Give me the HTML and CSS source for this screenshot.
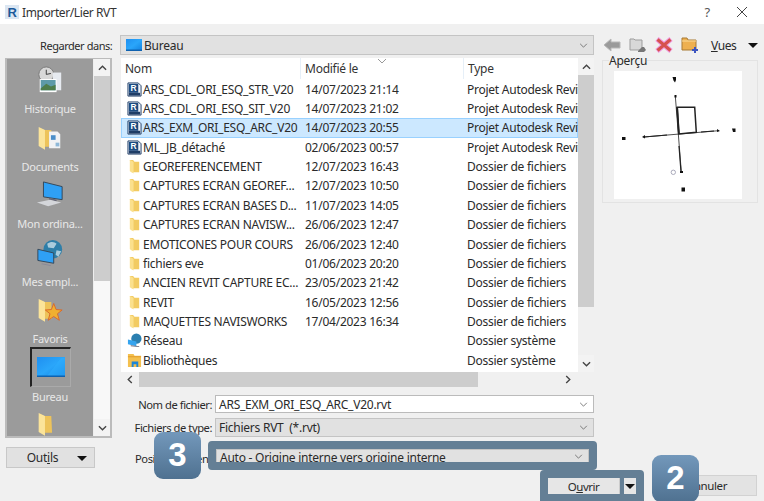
FILE: index.html
```html
<!DOCTYPE html>
<html lang="fr">
<head>
<meta charset="utf-8">
<title>Importer/Lier RVT</title>
<link rel="stylesheet" href="styles.css">
</head>
<body>
<svg class="defs" width="0" height="0" aria-hidden="true">
  <defs>
    <linearGradient id="screen" x1="0" y1="0" x2="1" y2="1"><stop offset="0" stop-color="#1f8ff0"/><stop offset=".5" stop-color="#2aa6fa"/><stop offset="1" stop-color="#1180e0"/></linearGradient>
    <symbol id="folder" viewBox="0 0 14 16">
      <path d="M2 1h3.500l1.500 2h5v11H4z" fill="#f2cb62"/>
      <path d="M2 1l4 2v12.500L2 13z" fill="#fbe08c"/>
    </symbol>
    <symbol id="rvt" viewBox="0 0 16 16">
      <path d="M1 1h11l3 3v11H1z" fill="#eef2f8" stroke="#1f3d66"/>
      <rect x="2" y="2" width="10" height="9.500" fill="#1c4b80"/>
      <text x="3.600" y="10" class="rvt-r">R</text>
      <rect x="2" y="11.500" width="12" height="3" fill="#1f3d66"/>
    </symbol>
    <symbol id="bigfolder" viewBox="0 0 26 30">
      <path d="M2 2l6 3h9l1 21H7z" fill="#edc35a"/>
      <path d="M1 1l8 4v25l-8-5z" fill="#fbe49a"/>
    </symbol>
  </defs>
</svg>
<div class="dialog">
  <header class="titlebar">
    <svg class="app-icon" viewBox="0 0 14 14" aria-hidden="true"><rect width="14" height="14" fill="#dbe6f2"/><text x="2.500" y="12" class="app-r">R</text></svg>
    <span class="title">Importer/Lier RVT</span>
    <span class="help">?</span>
    <svg class="close" viewBox="0 0 12 12" aria-hidden="true"><path d="M1 1l10 10M11 1L1 11" stroke="#444" fill="none"/></svg>
  </header>

  <div class="lookin">
    <label class="lookin-label">Regarder dans:</label>
    <div class="combo lookin-combo">
      <svg class="mini-screen" viewBox="0 0 16 12" aria-hidden="true"><rect width="16" height="12" fill="url(#screen)"/><rect y="10.500" width="16" height="1.500" fill="#0f62b0"/></svg>
      <span>Bureau</span>
      <svg class="chev" viewBox="0 0 10 6" aria-hidden="true"><path d="M1 1l4 4 4-4" fill="none" stroke="#666"/></svg>
    </div>
    <div class="toolbar">
      <svg class="tool" viewBox="0 0 18 16" aria-hidden="true"><path d="M1 8l7-6v3h9v6H8v3z" fill="#9a9a9a" stroke="#b8b8b8"/></svg>
      <svg class="tool" viewBox="0 0 18 16" aria-hidden="true"><path d="M1 2h4l1 1h7v10H1z" fill="#d8d8d8" stroke="#9d9d9d"/><path d="M9 14l4-4h2l2 3-2 2H9z" fill="#777"/></svg>
      <svg class="tool" viewBox="0 0 18 16" aria-hidden="true"><path d="M2 2l14 12M16 2L2 14" stroke="#f09adf" stroke-width="5"/><path d="M2.500 2.500l13 11M15.500 2.500l-13 11" stroke="#d6524e" stroke-width="3"/></svg>
      <svg class="tool" viewBox="0 0 18 16" aria-hidden="true"><path d="M1 1h5l1 2h8v10H1z" fill="#eeb050" stroke="#a87a35"/><path d="M1 4h14" stroke="#fbdc9c"/><path d="M14 10v6M11 13h6" stroke="#3c55c0" stroke-width="2"/></svg>
      <span class="vues"><u>V</u>ues</span>
      <span class="tri"></span>
    </div>
  </div>

  <div class="main">
    <aside class="side-col">
      <div class="places">
        <div class="places-list">
          <div class="place">
            <svg class="place-icon" viewBox="0 0 30 30" aria-hidden="true"><circle cx="11" cy="9" r="8" fill="#d8d8d8" stroke="#777"/><path d="M11 4v5l5-1" stroke="#333" fill="none"/><rect x="18" y="7" width="9" height="19" fill="#e6eaf0"/><rect x="4" y="14" width="18" height="14" fill="#fff"/><rect x="5" y="15" width="16" height="11" fill="#5d9aa8"/><path d="M5 24l6-5 5 3 5-2v6H5z" fill="#4e7d4a"/></svg>
            <span>Historique</span>
          </div>
          <div class="place">
            <svg class="place-icon" viewBox="0 0 30 30" aria-hidden="true"><use href="#bigfolder" width="22" height="28" x="2" y="1"/><path d="M14 8h9l3 3v15H14z" fill="#f1f2f4"/><path d="M16 12h5v5h-5z" fill="#4b8ec9"/><path d="M21 20h4v4h-4z" fill="#8fb8d8"/></svg>
            <span>Documents</span>
          </div>
          <div class="place">
            <svg class="place-icon" viewBox="0 0 30 30" aria-hidden="true"><path d="M8 1l20 5v14L8 17z" fill="#2fa0f5" stroke="#345"/><path d="M14 18l8 2v2l-8-2z" fill="#667"/><path d="M1 23l14-3 12 3-14 4z" fill="#d4d6da"/></svg>
            <span>Mon ordina...</span>
          </div>
          <div class="place">
            <svg class="place-icon" viewBox="0 0 30 30" aria-hidden="true"><circle cx="18" cy="11" r="10" fill="#2e7ea8"/><path d="M12 5c4-3 8-2 10 0l-3 5-6-1zM22 12l5 1-3 6-3-2z" fill="#a9cbdc"/><path d="M2 11l17 4v11L2 23z" fill="#2fa0f5" stroke="#345"/><path d="M6 26l10 2v1l-10-2z" fill="#889"/></svg>
            <span>Mes empl...</span>
          </div>
          <div class="place">
            <svg class="place-icon" viewBox="0 0 30 30" aria-hidden="true"><use href="#bigfolder" width="22" height="28" x="2" y="1"/><path d="M19 8l2.500 6.500 6.500.5-5 4 2 7-6-4-6 4 2-7-5-4 6.500-.5z" fill="#f0b030" stroke="#d9662a"/></svg>
            <span>Favoris</span>
          </div>
          <div class="place place-current">
            <div class="current-box">
              <svg class="place-screen" viewBox="0 0 28 20" aria-hidden="true"><rect width="28" height="20" fill="url(#screen)"/><path d="M10 19L24 1h4v18z" fill="#2fb0ff" opacity=".5"/><rect y="18.500" width="28" height="1.500" fill="#0f62b0"/></svg>
            </div>
            <span>Bureau</span>
          </div>
          <div class="place">
            <svg class="place-icon" viewBox="0 0 30 30" aria-hidden="true"><use href="#bigfolder" width="22" height="28" x="2" y="1"/></svg>
          </div>
        </div>
        <div class="vbar side-bar">
          <div class="arrow"><svg class="chev-b" viewBox="0 0 10 6" aria-hidden="true"><path d="M1 5l4-4 4 4" fill="none" stroke="#444" stroke-width="1.500"/></svg></div>
          <div class="thumb side-thumb"></div>
          <div class="track"></div>
          <div class="arrow"><svg class="chev-b" viewBox="0 0 10 6" aria-hidden="true"><path d="M1 1l4 4 4-4" fill="none" stroke="#444" stroke-width="1.500"/></svg></div>
        </div>
      </div>
      <div class="btn outils"><span class="btn-label">Out<u>i</u>ls</span><span class="tri"></span></div>
    </aside>

    <div class="center-col">
      <div class="files">
        <div class="files-inner">
          <div class="files-main">
            <div class="row head">
              <span class="c-name">Nom</span><span class="c-date">Modifié le</span><span class="c-type">Type</span>
              <svg class="sort" viewBox="0 0 8 4" aria-hidden="true"><path d="M0 0l4 4 4-4" fill="none" stroke="#999"/></svg>
            </div>
            <div class="row"><span class="c-name"><svg class="ficon"><use href="#rvt"/></svg><span class="fname">ARS_CDL_ORI_ESQ_STR_V20</span></span><span class="c-date">14/07/2023 21:14</span><span class="c-type">Projet Autodesk Revit</span></div>
            <div class="row"><span class="c-name"><svg class="ficon"><use href="#rvt"/></svg><span class="fname">ARS_CDL_ORI_ESQ_SIT_V20</span></span><span class="c-date">14/07/2023 21:02</span><span class="c-type">Projet Autodesk Revit</span></div>
            <div class="row selected"><span class="c-name"><svg class="ficon"><use href="#rvt"/></svg><span class="fname">ARS_EXM_ORI_ESQ_ARC_V20</span></span><span class="c-date">14/07/2023 20:55</span><span class="c-type">Projet Autodesk Revit</span></div>
            <div class="row"><span class="c-name"><svg class="ficon"><use href="#rvt"/></svg><span class="fname">ML_JB_détaché</span></span><span class="c-date">02/06/2023 00:57</span><span class="c-type">Projet Autodesk Revit</span></div>
            <div class="row"><span class="c-name"><svg class="ficon"><use href="#folder"/></svg><span class="fname">GEOREFERENCEMENT</span></span><span class="c-date">12/07/2023 16:43</span><span class="c-type">Dossier de fichiers</span></div>
            <div class="row"><span class="c-name"><svg class="ficon"><use href="#folder"/></svg><span class="fname">CAPTURES ECRAN GEOREF...</span></span><span class="c-date">12/07/2023 10:50</span><span class="c-type">Dossier de fichiers</span></div>
            <div class="row"><span class="c-name"><svg class="ficon"><use href="#folder"/></svg><span class="fname">CAPTURES ECRAN BASES D...</span></span><span class="c-date">11/07/2023 14:05</span><span class="c-type">Dossier de fichiers</span></div>
            <div class="row"><span class="c-name"><svg class="ficon"><use href="#folder"/></svg><span class="fname">CAPTURES ECRAN NAVISW...</span></span><span class="c-date">26/06/2023 12:47</span><span class="c-type">Dossier de fichiers</span></div>
            <div class="row"><span class="c-name"><svg class="ficon"><use href="#folder"/></svg><span class="fname">EMOTICONES POUR COURS</span></span><span class="c-date">26/06/2023 12:40</span><span class="c-type">Dossier de fichiers</span></div>
            <div class="row"><span class="c-name"><svg class="ficon"><use href="#folder"/></svg><span class="fname">fichiers eve</span></span><span class="c-date">01/06/2023 20:20</span><span class="c-type">Dossier de fichiers</span></div>
            <div class="row"><span class="c-name"><svg class="ficon"><use href="#folder"/></svg><span class="fname">ANCIEN REVIT CAPTURE EC...</span></span><span class="c-date">23/05/2023 21:42</span><span class="c-type">Dossier de fichiers</span></div>
            <div class="row"><span class="c-name"><svg class="ficon"><use href="#folder"/></svg><span class="fname">REVIT</span></span><span class="c-date">16/05/2023 12:56</span><span class="c-type">Dossier de fichiers</span></div>
            <div class="row"><span class="c-name"><svg class="ficon"><use href="#folder"/></svg><span class="fname">MAQUETTES NAVISWORKS</span></span><span class="c-date">17/04/2023 16:34</span><span class="c-type">Dossier de fichiers</span></div>
            <div class="row"><span class="c-name"><svg class="ficon" viewBox="0 0 16 16"><circle cx="10" cy="6" r="5.500" fill="#2b7fb0"/><path d="M1 7l9 2v5l-9-2z" fill="#35a4ef"/><path d="M4 13l9 1v1l-9-1z" fill="#667"/></svg><span class="fname">Réseau</span></span><span class="c-date"></span><span class="c-type">Dossier système</span></div>
            <div class="row"><span class="c-name"><svg class="ficon" viewBox="0 0 16 16"><path d="M1 1h6l1 2h7v12H1z" fill="#f4c04e"/><path d="M1 4h14" stroke="#e09a2a"/><path d="M5 15V9h7v6h-2v-3H7v3z" fill="#1c86d8"/></svg><span class="fname">Bibliothèques</span></span><span class="c-date"></span><span class="c-type">Dossier système</span></div>
          </div>
          <div class="vbar list-bar">
            <div class="arrow"><svg class="chev-b" viewBox="0 0 10 6" aria-hidden="true"><path d="M1 5l4-4 4 4" fill="none" stroke="#444" stroke-width="1.500"/></svg></div>
            <div class="thumb list-thumb"></div>
            <div class="track"></div>
            <div class="arrow"><svg class="chev-b" viewBox="0 0 10 6" aria-hidden="true"><path d="M1 1l4 4 4-4" fill="none" stroke="#444" stroke-width="1.500"/></svg></div>
          </div>
        </div>
        <div class="hbar">
          <div class="harrow"><svg class="chev-s" viewBox="0 0 6 10" aria-hidden="true"><path d="M5 1L1 5l4 4" fill="none" stroke="#444" stroke-width="1.500"/></svg></div>
          <div class="hthumb"></div>
          <div class="harrow"><svg class="chev-s" viewBox="0 0 6 10" aria-hidden="true"><path d="M1 1l4 4-4 4" fill="none" stroke="#444" stroke-width="1.500"/></svg></div>
          <div class="corner"></div>
        </div>
      </div>

      <div class="form-row first">
        <label class="form-label">Nom de fichier:</label>
        <div class="combo input"><span>ARS_EXM_ORI_ESQ_ARC_V20.rvt</span><svg class="chev" viewBox="0 0 10 6" aria-hidden="true"><path d="M1 1l4 4 4-4" fill="none" stroke="#666"/></svg></div>
      </div>
      <div class="form-row second">
        <label class="form-label">Fichiers de type:</label>
        <div class="combo"><span>Fichiers RVT&nbsp; (*.rvt)</span><svg class="chev" viewBox="0 0 10 6" aria-hidden="true"><path d="M1 1l4 4 4-4" fill="none" stroke="#666"/></svg></div>
      </div>
      <div class="form-row third">
        <label class="form-label">Positionnement:</label>
        <div class="highlight hl-combo">
          <div class="combo cut"><span>Auto - Origine interne vers origine interne</span><svg class="chev" viewBox="0 0 10 6" aria-hidden="true"><path d="M1 1l4 4 4-4" fill="none" stroke="#666"/></svg></div>
        </div>
      </div>
    </div>

    <aside class="preview-col">
      <fieldset class="preview">
        <legend>Aperçu</legend>
        <svg class="preview-img" viewBox="0 0 128 128" aria-hidden="true">
          <rect width="128" height="128" fill="#fff"/>
          <g fill="none" stroke="#222" stroke-width=".8">
            <path d="M61.300 25L67.300 100.700"/>
            <path d="M30 66L104.700 59.700"/>
            <path d="M30 66l23-2M87 61l13-1M65 75l2 26" stroke-width="1.200"/>
            <path d="M63.300 36.300H80.700L82.300 61.300L64.700 63Z" stroke-width="1.500"/>
            <path d="M63 36l2 27" stroke-width="1.800"/>
          </g>
          <g fill="#111">
            <path d="M58.500 6h3.500v3l-1 2.500-1.500-2zM118 57.500h3.500v3.500h-2.500zM8 66h3.500v3H8zM67.500 116.500h3.500v4h-3.500z"/>
            <rect x="66" y="100" width="3" height="2"/><rect x="60.500" y="24" width="2" height="2.500"/>
            <path d="M28 66l3-2v3.500zM106 60l-3-2v3z"/>
          </g>
          <circle cx="59.300" cy="101.300" r="2.200" fill="none" stroke="#aab"/>
        </svg>
      </fieldset>
    </aside>
  </div>

  <div class="actions">
    <div class="highlight hl-open">
      <div class="open-btn"><span class="open-main">O<u>u</u>vrir</span><span class="open-drop"><span class="tri"></span></span></div>
    </div>
    <div class="btn cancel">Annuler</div>
  </div>

  <div class="badge badge-3">3</div>
  <div class="badge badge-2">2</div>
</div>
</body>
</html>
```

FILE: styles.css
```css
* { box-sizing: border-box; }
html, body { margin: 0; padding: 0; }
body { width: 764px; height: 501px; overflow: hidden; background: #f0f0f0; font-family: "Noto Sans", "Open Sans", sans-serif; font-size: 12px; letter-spacing: -.25px; color: #2a2a2a; }
.defs { position: absolute; }
.rvt-r { font: 700 9px "Liberation Sans", sans-serif; fill: #fff; }
.app-r { font: 700 13px "Liberation Sans", sans-serif; fill: #1c5a9a; }

.dialog { position: relative; width: 764px; height: 501px; overflow: hidden; }

.titlebar { height: 24px; background: #fff; display: flex; align-items: center; padding: 0 16px 0 5px; font-size: 12px; letter-spacing: -.4px; }
.app-icon { width: 14px; height: 14px; margin-right: 3px; }
.title { flex: 1; color: #333; }
.help { width: 14px; margin-right: 22px; color: #555; text-align: center; font-size: 13px; }
.close { width: 12px; height: 12px; }

.lookin { display: flex; align-items: center; height: 20px; margin-top: 11px; padding-left: 40px; }
.lookin-label { width: 72px; white-space: nowrap; margin-right: 8px; font-size: 11px; letter-spacing: -.45px; }
.combo { display: flex; align-items: center; background: #e1e1e1; border: 1px solid #c4c4c4; padding: 0 5px 0 3px; min-width: 0; flex: 1; height: 19px; }
.combo > span { flex: 1; white-space: nowrap; }
.lookin-combo { flex: none; width: 474px; height: 20px; padding-left: 5px; }
.mini-screen { width: 16px; height: 12px; margin-right: 2px; }
.chev { width: 9px; height: 5px; }
.toolbar { display: flex; align-items: center; margin-left: 9px; }
.tool { width: 18px; height: 16px; margin-right: 8px; }
.vues { margin: 0 12px 0 4px; letter-spacing: -.4px; }
.tri { display: inline-block; width: 0; height: 0; border-left: 5px solid transparent; border-right: 5px solid transparent; border-top: 5px solid #111; }

.main { display: flex; margin-top: 3px; padding-left: 5px; height: 413px; }
.side-col { width: 107px; margin-right: 9px; flex: none; }
.places { display: flex; height: 380px; border: 1px solid #bbb; border-width: 1px 2px 2px 2px; background: #fff; }
.places-list { width: 86px; flex: none; background: #9b9b9b; color: #e8e8e8; overflow: hidden; display: flex; flex-direction: column; align-items: center; padding-top: 7px; font-size: 11px; }
.place { height: 57.6px; flex: none; display: flex; flex-direction: column; align-items: center; width: 100%; }
.place span { line-height: 14px; margin-top: 8px; white-space: nowrap; }
.place-icon { width: 28px; height: 28px; flex: none; }
.place-current { margin-top: -7px; height: 63px; }
.current-box { width: 41px; height: 40px; flex: none; border: 1px solid #aaa; border-top: 2px solid #222; border-left: 2px solid #222; display: flex; align-items: center; justify-content: center; }
.place-screen { width: 28px; height: 20px; }
.place-current span { margin-top: 3px; }
.vbar { display: flex; flex-direction: column; background: #f0f0f0; flex: none; }
.side-bar { width: 17px; background: #fff; border-left: 1px solid #eee; }
.arrow { height: 17px; display: flex; align-items: center; justify-content: center; flex: none; background: #f3f3f3; }
.chev-b { width: 9px; height: 6px; }
.chev-s { width: 6px; height: 9px; }
.thumb { background: #cdcdcd; flex: none; }
.track { flex: 1; background: #f0f0f0; }
.side-bar .track { background: #f8f8f8; }
.side-thumb { height: 205px; }
.list-thumb { height: 232px; }

.btn { background: #e1e1e1; border: 1px solid #c8c8c8; display: flex; align-items: center; justify-content: center; }
.outils { width: 89px; height: 21px; margin: 9px 0 0 1px; position: relative; padding-right: 16px; }
.outils .tri { position: absolute; right: 7px; top: 8px; }

.center-col { width: 473px; flex: none; }
.files { height: 329px; background: #fff; display: flex; flex-direction: column; }
.files-inner { display: flex; height: 314px; }
.files-main { width: 457px; flex: none; overflow: hidden; }
.list-bar { width: 16px; }
.row { display: grid; grid-template-columns: 179px 163px 115px; height: 19.35px; align-items: center; white-space: nowrap; font-size: 12px; color: #2a2a2a; }
.row > span { overflow: hidden; min-width: 0; }
.head { height: 21.6px; position: relative; color: #333; }
.head .c-name { padding-left: 4px; }
.head .c-date { padding-left: 4px; border-left: 1px solid #e6eff8; line-height: 21px; }
.head .c-type { padding-left: 4px; border-left: 1px solid #e6eff8; line-height: 21px; }
.sort { position: absolute; left: 257px; top: 1px; width: 8px; height: 4px; }
.c-name { display: flex; align-items: center; padding-left: 6px; height: 100%; }
.ficon { width: 15px; height: 15px; flex: none; margin-right: 1px; }
.c-date { padding-left: 5px; line-height: 19px; }
.c-type { padding-left: 4px; line-height: 19px; }
.selected { background: #cce8ff; box-shadow: inset 0 0 0 1px #99d1ff; }
.hbar { height: 15px; display: flex; background: #f0f0f0; }
.harrow { width: 18px; flex: none; display: flex; align-items: center; justify-content: center; }
.hthumb { width: 339px; background: #cdcdcd; }
.hbar .hthumb + .harrow { margin-left: 81px; }
.corner { width: 16px; background: #f0f0f0; flex: none; }

.form-row { display: flex; align-items: center; }
.form-label { white-space: nowrap; width: 94px; text-align: right; padding-right: 3px; flex: none; letter-spacing: -.45px; font-size: 11.2px; }
.first { height: 18px; margin-top: 8px; }
.second { height: 19px; margin-top: 5px; }
.third { height: 29px; margin-top: 4px; }
.input { background: #fff; border-color: #bbb; height: 18px; }
.third .form-label { width: auto; padding: 5px 0 0; margin-left: 14px; }
.highlight { background: #647f95; }
.hl-combo { position: absolute; left: 208px; top: 441px; width: 389px; height: 29px; padding: 8px; border-radius: 4px; }
.cut { height: 13px; overflow: hidden; align-items: flex-start; border-bottom: 0; }
.cut > span { line-height: 15px; }
.cut .chev { margin-top: 4px; }

.preview-col { width: 156px; margin-left: 8px; flex: none; }
.preview { margin: -3px 0 0; padding: 5px 0 0 11px; height: 148px; border: 1px solid #e3e3e3; }
.preview legend { padding: 0; margin-left: -5px; line-height: 11px; font-size: 12px; }
.preview-img { display: block; width: 128px; height: 128px; }

.actions { position: absolute; left: 540px; top: 470px; display: flex; }
.hl-open { width: 104px; height: 31px; padding: 8px 8px 7px; border-radius: 4px 4px 0 0; flex: none; }
.open-btn { display: flex; height: 16px; }
.open-main { width: 72px; background: #e6e6e6; display: flex; align-items: center; justify-content: center; border-right: 1px solid #ccc; letter-spacing: -.5px; font-size: 11.5px; }
.open-drop { margin-left: 4px; width: 12px; background: #e6e6e6; display: flex; align-items: center; justify-content: center; }
.cancel { width: 101px; height: 21px; margin: 5px 0 0 12px; padding-left: 1px; font-size: 11.5px; letter-spacing: -.4px; background: #e3e3e3; border-color: #d2d2d2; }

.badge { position: absolute; width: 47px; height: 47px; border-radius: 9px; background: linear-gradient(#7398bb, #4f7190); color: #fff; font: 700 33px/46px "Liberation Sans", sans-serif; letter-spacing: 0; text-align: center; }
.badge-3 { left: 154px; top: 432px; }
.badge-2 { left: 652px; top: 455px; }
```
